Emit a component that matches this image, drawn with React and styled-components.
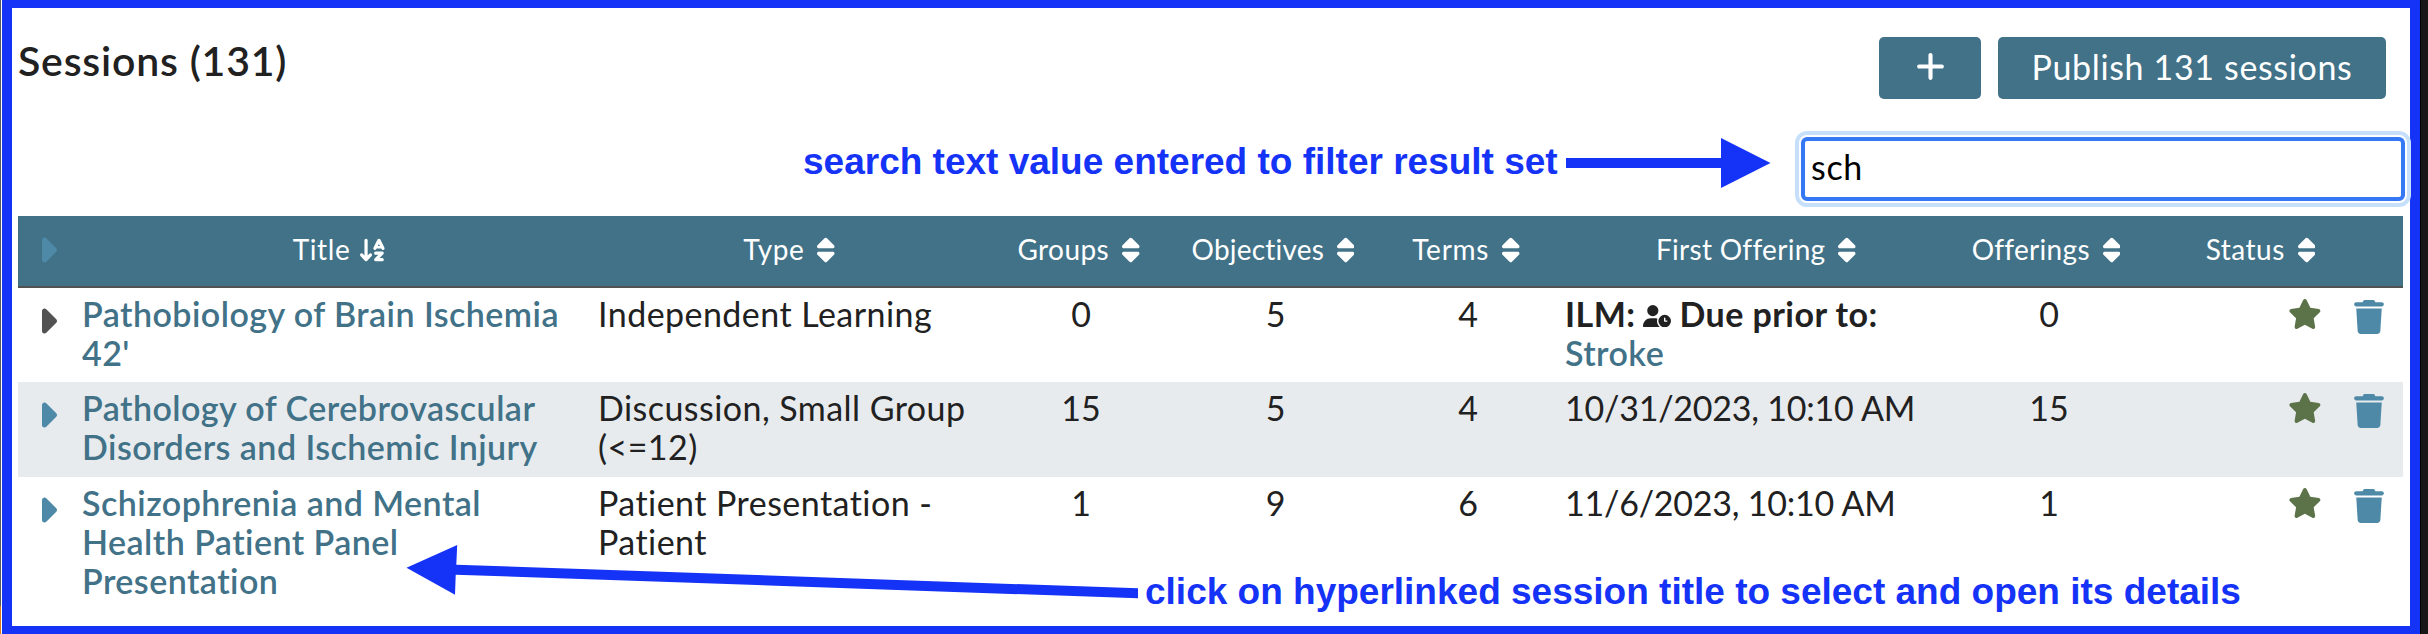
import React from 'react';
import styled, { createGlobalStyle } from 'styled-components';
import {
  FaArrowDownAZ,
  FaCaretRight,
  FaPlus,
  FaSort,
  FaStar,
  FaTrash,
  FaUserClock,
} from 'react-icons/fa6';

const TEAL = '#417288';
const LIGHT_TEAL = '#4e89a7';
const BLUE = '#1532f7';

const GlobalStyle = createGlobalStyle`
  body {
    margin: 0;
    background: #fff;
    color: #212121;
    font-family: Lato, 'Open Sans', sans-serif;
    font-size: 34px;
    line-height: 39px;
  }
`;

const Desktop = styled.div`
  position: relative;
  display: flex;
  box-sizing: border-box;
  width: 2428px;
  height: 634px;
  overflow: hidden;
  background: #fff;
`;

const LeftEdge = styled.div`
  width: 1px;
  margin-right: 1px;
  background: linear-gradient(#5a5a5a 606px, #d9781c 606px);
`;

const RightEdge = styled.div`
  flex: 1;
  border-left: 1px solid #000;
  background: #171717;
`;

const Frame = styled.main`
  box-sizing: border-box;
  width: 2418px;
  border: solid ${BLUE};
  border-width: 8px 10px;
  padding: 0 7px 0 6px;
`;

const TopBar = styled.header`
  display: flex;
  justify-content: space-between;
  align-items: flex-start;
  height: 123px;
  padding: 29px 17px 0 0;
  box-sizing: border-box;
`;

const Heading = styled.h2`
  margin: 2px 0 0;
  font-size: 41px;
  line-height: 44px;
  font-weight: 600;
  letter-spacing: 0.8px;
`;

const Actions = styled.div`
  display: flex;
  gap: 17px;
`;

const Button = styled.button`
  display: flex;
  align-items: center;
  justify-content: center;
  width: ${(p) => p.$width}px;
  height: 62px;
  padding: 0 0 3px;
  border: 0;
  border-radius: 5px;
  background: ${TEAL};
  color: #fff;
  font: inherit;
  letter-spacing: 0.65px;
`;

const PlusIcon = styled(FaPlus)`
  width: 31px;
  height: 33px;
`;

const SearchRow = styled.div`
  display: flex;
  justify-content: flex-end;
  height: 85px;
  padding-top: 6px;
  box-sizing: border-box;
`;

const SearchInput = styled.input`
  box-sizing: border-box;
  width: 604px;
  height: 64px;
  margin: 0 -2px 0 0;
  padding: 0 6px 5px;
  border: 4px solid #3478f6;
  border-radius: 6px;
  outline: 4px solid #c6e0fb;
  outline-offset: 2px;
  background: #fff;
  color: #000;
  font: inherit;
  letter-spacing: 0.7px;
`;

const Grid = styled.div`
  display: grid;
  grid-template-columns: 62px 516px 386px 197px 192px 193px 384px 201px 254px;
`;

const HeaderRow = styled(Grid)`
  height: 72px;
  box-sizing: border-box;
  padding-bottom: 3px;
  border-bottom: 2px solid #525252;
  background: ${TEAL};
  color: #fff;
  font-size: 28px;
`;

const HeaderCell = styled.div`
  display: flex;
  align-items: center;
  justify-content: ${(p) => (p.$start ? 'flex-start' : 'center')};
  gap: ${(p) => p.$gap ?? 13}px;
  padding-right: ${(p) => p.$padRight ?? 0}px;
  letter-spacing: ${(p) => p.$track ?? 0.3}px;
`;

const SortIcon = styled(FaSort)`
  width: 17.5px;
  height: 28px;
`;

const AlphaIcon = styled(FaArrowDownAZ)`
  width: 29px;
  height: 26px;
  margin-right: -4px;
`;

const Caret = styled(FaCaretRight)`
  width: 20px;
  height: 40px;
  margin-left: 19px;
  color: ${(p) => p.color};
`;

const Row = styled(Grid)`
  height: ${(p) => p.$height}px;
  padding-top: 6px;
  box-sizing: border-box;
  background: ${(p) => (p.$striped ? '#e8ebee' : 'transparent')};
`;

const ExpandCell = styled.div`
  padding-top: 7px;
  line-height: 0;
`;

const TitleLink = styled.a`
  padding: 0 30px 0 2px;
  color: ${TEAL};
  font-weight: 600;
  letter-spacing: 0.46px;
`;

const TextCell = styled.div`
  padding-left: ${(p) => p.$inset ?? 1}px;
  letter-spacing: ${(p) => p.$track ?? 0.45}px;
`;

const NumberCell = styled.div`
  padding-left: 1px;
  text-align: center;
`;

const Due = styled.div`
  display: flex;
  align-items: center;
  gap: 8px;
  font-weight: 700;
  white-space: nowrap;
`;

const ClockIcon = styled(FaUserClock)`
  width: 28px;
  height: 22.4px;
  margin-top: 5px;
`;

const PriorLink = styled.a`
  color: ${TEAL};
  font-weight: 600;
`;

const StatusCell = styled.div`
  display: flex;
  align-items: flex-start;
  justify-content: flex-end;
  gap: 32px;
  padding-right: 19px;
`;

const StarIcon = styled(FaStar)`
  width: 33.75px;
  height: 30px;
  margin-top: 5px;
  color: #5c7349;
`;

const TrashIcon = styled(FaTrash)`
  width: 30px;
  height: 34px;
  margin-top: 6px;
  color: ${LIGHT_TEAL};
`;

const Note = styled.div`
  position: absolute;
  left: ${(p) => p.$x}px;
  top: ${(p) => p.$y}px;
  color: ${BLUE};
  font: bold 37px/42px 'Liberation Sans', Arial, sans-serif;
  white-space: nowrap;
`;

const Arrows = styled.svg`
  position: absolute;
  inset: 0;
  fill: ${BLUE};
  pointer-events: none;
`;

const columns = [
  { label: 'Type', track: 0.5 },
  { label: 'Groups', track: 0.4, padRight: 4 },
  { label: 'Objectives', track: 0.2, padRight: 4 },
  { label: 'Terms', track: 0.75, padRight: 3 },
  { label: 'First Offering', track: 0.3 },
  { label: 'Offerings', track: 0.3, padRight: 5 },
  { label: 'Status', track: 0.5, padRight: 31 },
];

const sessions = [
  {
    title: "Pathobiology of Brain Ischemia 42'",
    type: 'Independent Learning',
    counts: [0, 5, 4],
    prior: 'Stroke',
    offerings: 0,
    height: 94,
    caret: '#525252',
  },
  {
    title: 'Pathology of Cerebrovascular Disorders and Ischemic Injury',
    type: 'Discussion, Small Group (<=12)',
    counts: [15, 5, 4],
    first: '10/31/2023, 10:10 AM',
    offerings: 15,
    height: 95,
    striped: true,
    caret: LIGHT_TEAL,
  },
  {
    title: 'Schizophrenia and Mental Health Patient Panel Presentation',
    type: 'Patient Presentation - Patient',
    counts: [1, 9, 6],
    first: '11/6/2023, 10:10 AM',
    offerings: 1,
    height: 140,
    caret: LIGHT_TEAL,
  },
];

function SessionRow({ session }) {
  return (
    <Row $height={session.height} $striped={session.striped}>
      <ExpandCell>
        <Caret color={session.caret} />
      </ExpandCell>
      <TitleLink>{session.title}</TitleLink>
      <TextCell $inset={2}>{session.type}</TextCell>
      {session.counts.map((n, i) => (
        <NumberCell key={i}>{n}</NumberCell>
      ))}
      {session.prior ? (
        <TextCell>
          <Due>
            ILM: <ClockIcon /> Due prior to:
          </Due>
          <PriorLink>{session.prior}</PriorLink>
        </TextCell>
      ) : (
        <TextCell $track={-0.22}>{session.first}</TextCell>
      )}
      <NumberCell>{session.offerings}</NumberCell>
      <StatusCell>
        <StarIcon />
        <TrashIcon />
      </StatusCell>
    </Row>
  );
}

export default function App() {
  return (
    <Desktop>
      <GlobalStyle />
      <LeftEdge />
      <Frame>
        <TopBar>
          <Heading>Sessions (131)</Heading>
          <Actions>
            <Button $width={102}>
              <PlusIcon />
            </Button>
            <Button $width={388}>Publish 131 sessions</Button>
          </Actions>
        </TopBar>
        <SearchRow>
          <SearchInput defaultValue="sch" />
        </SearchRow>
        <HeaderRow>
          <HeaderCell $start>
            <Caret color={LIGHT_TEAL} />
          </HeaderCell>
          <HeaderCell $gap={8} $track={0.6}>
            Title <AlphaIcon />
          </HeaderCell>
          {columns.map((c) => (
            <HeaderCell key={c.label} $track={c.track} $padRight={c.padRight}>
              {c.label} <SortIcon />
            </HeaderCell>
          ))}
        </HeaderRow>
        {sessions.map((s) => (
          <SessionRow key={s.title} session={s} />
        ))}
      </Frame>
      <RightEdge />
      <Note $x={803} $y={141}>search text value entered to filter result set</Note>
      <Note $x={1145} $y={571}>
        click on hyperlinked session title to select and open its details
      </Note>
      <Arrows width="2428" height="634">
        <path d="M1566 158H1721V138L1770.5 163L1721 188V168H1566Z" />
        <path d="M1138 588.3V598.3L455.7 574.7L455 594.7L406.5 567.7L457.2 545L456.3 564.7Z" />
      </Arrows>
    </Desktop>
  );
}
